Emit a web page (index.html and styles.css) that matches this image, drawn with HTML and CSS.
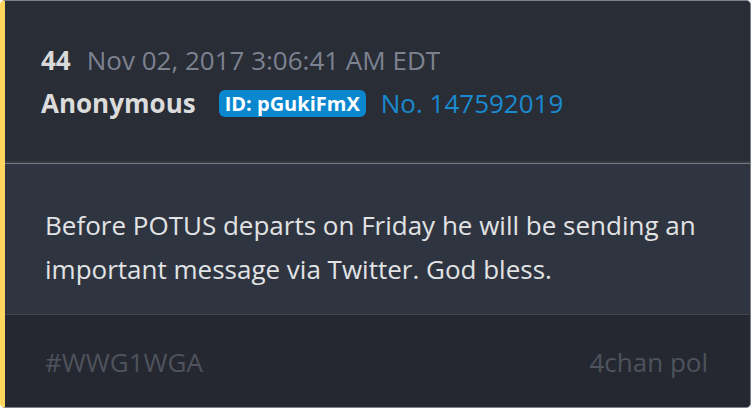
FILE: index.html
```html
<!DOCTYPE html>
<html>
<head>
<meta charset="utf-8">
<link rel="stylesheet" href="styles.css">
</head>
<body>
<div class="card">
  <div class="head">
    <div class="row1"><span class="num">44</span><span class="date">Nov 02, 2017 3:06:41 AM EDT</span></div>
    <div class="row2"><span class="name">Anonymous</span><span class="badge">ID: pGukiFmX</span><span class="postno">No. 147592019</span></div>
  </div>
  <div class="body">
    <p class="text">Before POTUS departs on Friday he will be sending an important message via Twitter. God bless.</p>
  </div>
  <div class="foot">
    <span class="tag">#WWG1WGA</span>
    <span class="src">4chan pol</span>
  </div>
</div>
</body>
</html>
```
FILE: styles.css
```css
html, body { margin: 0; padding: 0; background: #ffffff; }
body { width: 752px; height: 410px; font-family: "Open Sans", "Noto Sans", sans-serif; }
.card {
  box-sizing: border-box;
  width: 751px;
  height: 408px;
  border: 1px solid #7b808b;
  border-left: 5px solid #ffd75e;
  border-radius: 5px;
  overflow: hidden;
  display: flex;
  flex-direction: column;
  background: #292d36;
}
.head {
  height: 163px;
  flex: none;
  box-sizing: border-box;
  padding: 41px 0 0 36px;
  background: #292d36;
  border-bottom: 1px solid #767b86;
  box-shadow: inset 0 -2px 0 #363a43;
}
.row1 { display: flex; align-items: baseline; height: 36px; line-height: 36px; }
.num { font-weight: 700; font-size: 26px; color: #d9d9d9; }
.date { font-size: 26px; color: #7d8291; margin-left: 16px; }
.row2 { display: flex; align-items: center; margin-top: 7px; height: 36px; line-height: 36px; }
.name { font-weight: 700; font-size: 26px; color: #dcdcdc; }
.badge { margin-left: 23px; background: #0a87cf; color: #ffffff; font-weight: 700; font-size: 20px; border-radius: 6px; padding: 0 6px; line-height: 27px; height: 27px; }
.postno { margin-left: 15px; font-size: 26px; color: #1a8ad0; }
.body {
  height: 151px;
  flex: none;
  box-sizing: border-box;
  background: #2f3540;
  padding: 39px 40px 0 40px;
  border-bottom: 1px solid #3f444e;
}
.text { margin: 0; font-size: 26px; line-height: 44px; color: #e2e3e5; }
.foot {
  flex: 1;
  background: #252830;
  display: flex;
  justify-content: space-between;
  align-items: flex-start;
  padding: 29px 42px 0 40px;
}
.tag, .src { font-size: 26px; line-height: 36px; color: #4e535d; }
```
